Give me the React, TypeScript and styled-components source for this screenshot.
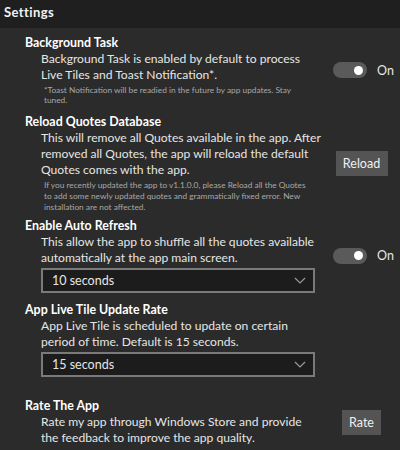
import styled, { createGlobalStyle } from 'styled-components';

const GlobalStyle = createGlobalStyle`
  html, body {
    margin: 0;
    padding: 0;
    background: #2b2b2b;
  }
  body {
    font-family: Lato, "Noto Sans", sans-serif;
  }
`;

const Chevron = () => (
  <svg width="12" height="7" viewBox="0 0 12 7" fill="none">
    <path d="M1 1l5 5 5-5" stroke="#9a9a9a" strokeWidth="1.2" />
  </svg>
);

const Toggle = () => (
  <ToggleWrap>
    <Track>
      <Knob />
    </Track>
    <ToggleLabel>On</ToggleLabel>
  </ToggleWrap>
);

const Select = ({ value }: { value: string }) => (
  <SelectBox>
    <span>{value}</span>
    <Chevron />
  </SelectBox>
);

const App = () => {
  return (
    <>
      <GlobalStyle />
      <Page>
        <Header>Settings</Header>
        <List>
          <Section $top={7}>
            <Main>
              <Title>Background Task</Title>
              <Desc>
                Background Task is enabled by default to process
                <br />
                Live Tiles and Toast Notification*.
              </Desc>
              <Note>
                *Toast Notification will be readied in the future by app updates. Stay
                <br />
                tuned.
              </Note>
            </Main>
            <Control>
              <Toggle />
            </Control>
          </Section>

          <Section $top={9}>
            <Main>
              <Title>Reload Quotes Database</Title>
              <Desc>
                This will remove all Quotes available in the app. After
                <br />
                removed all Quotes, the app will reload the default
                <br />
                Quotes comes with the app.
              </Desc>
              <Note $line={11}>
                If you recently updated the app to v1.1.0.0, please Reload all the Quotes
                <br />
                to add some newly updated quotes and grammatically fixed error. New
                <br />
                installation are not affected.
              </Note>
            </Main>
            <Control>
              <Button $width={52}>Reload</Button>
            </Control>
          </Section>

          <Section $top={5}>
            <Main>
              <Title>Enable Auto Refresh</Title>
              <Desc>
                This allow the app to shuffle all the quotes available
                <br />
                automatically at the app main screen.
              </Desc>
              <Select value="10 seconds" />
            </Main>
            <Control>
              <Toggle />
            </Control>
          </Section>

          <Section $top={9}>
            <Main>
              <Title>App Live Tile Update Rate</Title>
              <Desc>
                App Live Tile is scheduled to update on certain
                <br />
                period of time. Default is 15 seconds.
              </Desc>
              <Select value="15 seconds" />
            </Main>
            <Control />
          </Section>

          <Section $top={21}>
            <Main>
              <Title>Rate The App</Title>
              <Desc>
                Rate my app through Windows Store and provide
                <br />
                the feedback to improve the app quality.
              </Desc>
            </Main>
            <Control>
              <Button $width={39}>Rate</Button>
            </Control>
          </Section>
        </List>
      </Page>
    </>
  );
};

export default App;

const Page = styled.div`
  width: 400px;
  height: 450px;
  overflow: hidden;
  background: #2b2b2b;
  color: #fff;
`;

const Header = styled.div`
  height: 28px;
  background: #1f1f1f;
  padding-left: 4px;
  font-size: 13px;
  font-weight: 700;
  line-height: 25px;
  letter-spacing: 0.4px;
  color: #f2f2f2;
`;

const List = styled.div`
  display: flex;
  flex-direction: column;
`;

const Section = styled.div<{ $top: number }>`
  display: flex;
  align-items: center;
  margin-top: ${({ $top }) => $top}px;
`;

const Main = styled.div`
  flex: 0 0 299px;
  min-width: 0;
  padding-left: 25px;
  box-sizing: border-box;
  display: flex;
  flex-direction: column;
`;

const Control = styled.div`
  flex: 1;
  display: flex;
  justify-content: center;
  align-items: center;
  padding-left: 24px;
`;

const Title = styled.div`
  font-size: 12.4px;
  font-weight: 700;
  line-height: 16px;
  color: #fff;
`;

const Desc = styled.div`
  padding-left: 16px;
  font-size: 12.1px;
  line-height: 16px;
  color: #e6e6e6;
  white-space: nowrap;
`;

const Note = styled.div<{ $line?: number }>`
  padding-left: 19px;
  margin-top: 2px;
  font-size: 8.3px;
  line-height: ${({ $line }) => $line ?? 10}px;
  color: #a8a8a8;
  white-space: nowrap;
`;

const ToggleWrap = styled.div`
  display: flex;
  align-items: center;
  gap: 10px;
  margin-left: 4px;
`;

const Track = styled.div`
  width: 34px;
  height: 16px;
  border-radius: 8px;
  background: #5a5a5a;
  display: flex;
  align-items: center;
  justify-content: flex-end;
  padding-right: 4px;
  box-sizing: border-box;
`;

const Knob = styled.div`
  width: 9px;
  height: 9px;
  border-radius: 50%;
  background: #fff;
`;

const ToggleLabel = styled.span`
  font-size: 12.5px;
  color: #e6e6e6;
`;

const Button = styled.div<{ $width: number }>`
  width: ${({ $width }) => $width}px;
  height: 25px;
  background: #545454;
  color: #f0f0f0;
  font-size: 12.5px;
  display: flex;
  align-items: center;
  justify-content: center;
`;

const SelectBox = styled.div`
  margin: 2px 0 0 16px;
  width: 274px;
  height: 25px;
  box-sizing: border-box;
  border: 2px solid #7a7a7a;
  background: #1c1c1c;
  display: flex;
  align-items: center;
  justify-content: space-between;
  padding: 0 7px 0 9px;
  font-size: 12.5px;
  color: #e6e6e6;
`;
